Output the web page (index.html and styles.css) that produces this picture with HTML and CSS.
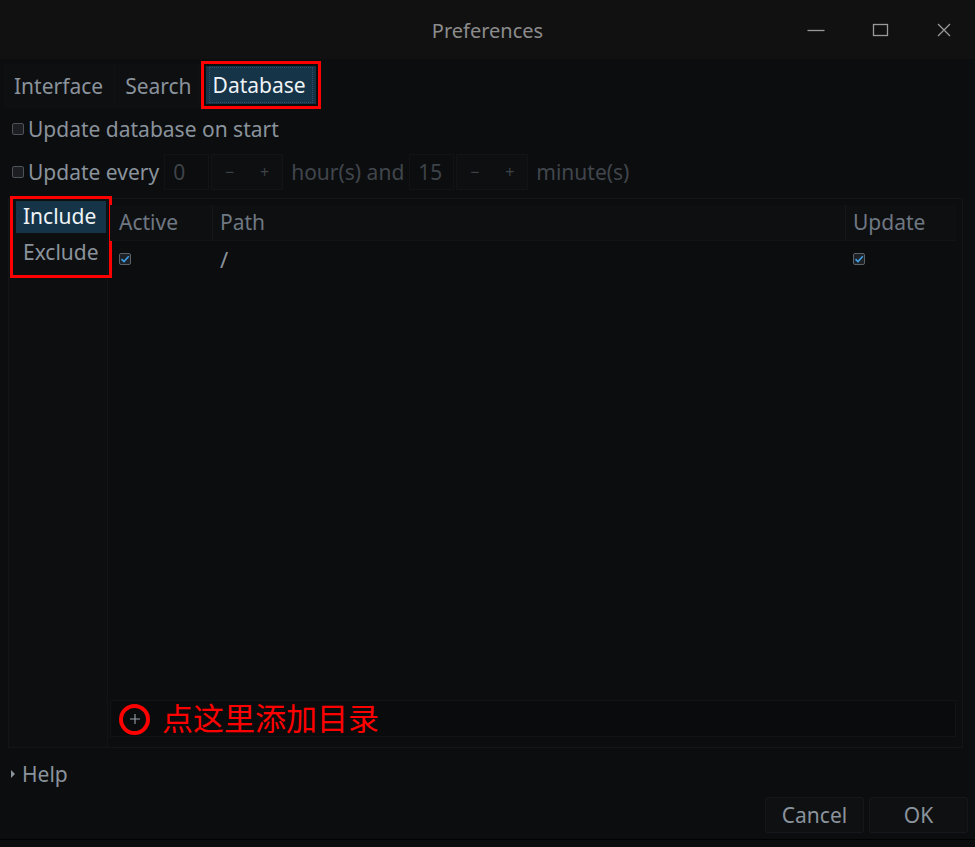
FILE: index.html
```html
<!DOCTYPE html>
<html lang="en">
<head>
<meta charset="utf-8">
<title>Preferences</title>
<link rel="stylesheet" href="styles.css">
</head>
<body>
<div class="window">
  <header class="titlebar">
    <div class="tb-spacer"></div>
    <div class="tb-title">Preferences</div>
    <div class="tb-controls">
      <span class="ctl"><svg width="18" height="18" viewBox="0 0 18 18"><path d="M0.5 9.5H17.5" stroke="#9a9a9a" stroke-width="1.3"/></svg></span>
      <span class="ctl"><svg width="18" height="18" viewBox="0 0 18 18"><rect x="2.5" y="3.5" width="14" height="11" fill="none" stroke="#9a9a9a" stroke-width="1.3"/></svg></span>
      <span class="ctl"><svg width="18" height="18" viewBox="0 0 18 18"><path d="M3 3L15 15M15 3L3 15" stroke="#9a9a9a" stroke-width="1.3"/></svg></span>
    </div>
  </header>

  <nav class="tabs">
    <div class="tab">Interface</div>
    <div class="tab">Search</div>
    <div class="tab tab-active marked"><span class="focus">Database</span></div>
  </nav>

  <section class="options">
    <label class="row"><span class="cb"></span><span class="lbl">Update database on start</span></label>
    <div class="row row-spin">
      <span class="cb"></span><span class="lbl">Update every</span>
      <span class="spin-val">0</span>
      <span class="spin-btns"><span>−</span><span>+</span></span>
      <span class="dim">hour(s) and</span>
      <span class="spin-val">15</span>
      <span class="spin-btns"><span>−</span><span>+</span></span>
      <span class="dim">minute(s)</span>
    </div>
  </section>

  <section class="panel">
    <div class="side">
      <div class="list marked">
        <div class="item item-active">Include</div>
        <div class="item">Exclude</div>
      </div>
    </div>
    <div class="tablewrap">
      <div class="table">
        <div class="thead">
          <div class="th c-active">Active</div>
          <div class="th c-path">Path</div>
          <div class="th c-update">Update</div>
        </div>
        <div class="tr">
          <div class="td c-active"><span class="cb cb-on"><svg width="10" height="10" viewBox="0 0 10 10"><path d="M1.5 5.2L4 7.6L8.8 2.2" fill="none" stroke="#3d9fe6" stroke-width="1.6"/></svg></span></div>
          <div class="td c-path path">/</div>
          <div class="td c-update"><span class="cb cb-on"><svg width="10" height="10" viewBox="0 0 10 10"><path d="M1.5 5.2L4 7.6L8.8 2.2" fill="none" stroke="#3d9fe6" stroke-width="1.6"/></svg></span></div>
        </div>
      </div>
      <div class="toolbar">
        <span class="add-btn"><svg width="12" height="12" viewBox="0 0 12 12"><path d="M6 1V11M1 6H11" stroke="#9aa3ad" stroke-width="1.1"/></svg></span>
        <span class="hint">点这里添加目录</span>
      </div>
    </div>
  </section>

  <div class="help"><span class="tri"></span>Help</div>

  <footer class="buttons">
    <button class="btn">Cancel</button>
    <button class="btn">OK</button>
  </footer>
</div>
</body>
</html>
```

FILE: styles.css
```css
* { box-sizing: border-box; }
html, body { margin: 0; padding: 0; }
body {
  width: 975px;
  height: 847px;
  background: #0c0d0f;
  font-family: "Noto Sans", "Noto Sans CJK SC", sans-serif;
  color: #8a939c;
  overflow: hidden;
}
.window {
  height: 840px;
  display: flex;
  flex-direction: column;
  border-bottom: 1px solid #020203;
}

/* title bar */
.titlebar {
  height: 59px;
  flex: none;
  background: #111112;
  display: grid;
  grid-template-columns: 1fr auto 1fr;
  align-items: center;
}
.tb-title {
  font-size: 20px;
  color: #8c8c8c;
  padding-top: 1px;
}
.tb-controls {
  display: flex;
  justify-content: flex-end;
  padding-right: 22px;
  gap: 46px;
}
.ctl { display: flex; width: 18px; height: 18px; }

/* tabs */
.tabs {
  display: flex;
  align-items: stretch;
  height: 44px;
  flex: none;
  margin: 5px 0 0 4px;
}
.tab {
  font-size: 21px;
  padding: 0 11px 0 10px;
  display: flex;
  align-items: center;
  color: #8a939c;
  background: #0e0f11;
  border-right: 1px solid #101113;
}
.tab:nth-child(2) { padding: 0 7px 0 10px; }
.tab-active {
  background: #163448;
  color: #eef3f7;
  margin: 2px 0 0 6px;
  padding: 0 3px;
  height: 38px;
  align-self: flex-start;
  border: none;
}
.focus {
  border: 1px dotted #2e4f66;
  padding: 0 6px 0 3px;
  line-height: 34px;
}
.marked {
  outline: 3px solid #ff0000;
  outline-offset: 2px;
}

/* options */
.options {
  display: flex;
  flex-direction: column;
  padding: 4px 0 0 12px;
  flex: none;
}
.row {
  display: flex;
  align-items: center;
  font-size: 21px;
  height: 34px;
}
.row-spin { height: 44px; margin-top: 4px; }
.cb {
  display: inline-flex;
  align-items: center;
  justify-content: center;
  width: 12px;
  height: 12px;
  border: 1px solid #4c5258;
  border-radius: 2px;
  background: #1c1e21;
  margin-right: 4px;
}
.cb-on { border-color: #5a6168; background: #1e2125; margin: 0; }
.spin-val {
  width: 45px;
  height: 36px;
  border: 1px solid #111316;
  color: #3d4349;
  margin-left: 5px;
  padding-left: 8px;
  display: flex;
  align-items: center;
}
.spin-btns {
  display: flex;
  width: 72px;
  height: 36px;
  border: 1px solid #121417;
  background: #0e0f11;
  color: #3d4349;
  margin-left: 2px;
  align-items: center;
  justify-content: space-around;
  font-size: 16px;
}
.dim { color: #40464c; margin-left: 8px; }

/* panel */
.panel {
  flex: 1;
  display: flex;
  margin: 4px 12px 0 8px;
  border: 1px solid #131518;
  background: #0c0d0f;
  min-height: 0;
}
.side {
  width: 99px;
  flex: none;
  background: #0d0e10;
  border-right: 1px solid #121417;
  padding: 2px 0 0 6px;
}
.list {
  width: 92px;
  padding: 0 1px 3px;
}
.item {
  font-size: 21px;
  height: 32px;
  display: flex;
  align-items: center;
  padding: 0 0 2px 7px;
  color: #8a939c;
}
.item + .item { margin-top: 3px; height: 34px; }
.item-active { background: #163448; color: #eef3f7; }

.tablewrap {
  flex: 1;
  display: flex;
  flex-direction: column;
  padding: 6px 6px 10px 2px;
}
.table { flex: 1; }
.thead {
  display: flex;
  height: 36px;
  background: #0e0f11;
  border-bottom: 1px solid #121417;
}
.th {
  font-size: 21px;
  color: #6e7882;
  display: flex;
  align-items: center;
  padding: 0 0 1px 9px;
}
.c-active { width: 102px; }
.c-path { flex: 1; border-left: 1px solid #15171a; }
.c-update { width: 111px; border-left: 1px solid #15171a; }
.th.c-path, .th.c-update { padding-left: 7px; }
.tr { display: flex; height: 36px; }
.td { display: flex; align-items: center; padding-left: 9px; }
.td.c-path, .td.c-update { border-left-color: transparent; padding-left: 7px; }
.path { font-size: 22px; color: #8a939c; }
.toolbar {
  display: flex;
  align-items: center;
  height: 37px;
  flex: none;
  background: #0a0b0c;
  border: 1px solid #111315;
  padding-left: 8px;
}
.add-btn {
  width: 31px;
  height: 31px;
  border: 4px solid #ff0000;
  border-radius: 50%;
  display: flex;
  align-items: center;
  justify-content: center;
  margin-top: 1px;
}
.hint {
  font-family: "Noto Sans CJK SC", sans-serif;
  font-size: 31px;
  color: #ff0000;
  margin: 0 0 4px 12px;
  line-height: 1;
}

/* help */
.help {
  display: flex;
  align-items: center;
  font-size: 21px;
  height: 40px;
  flex: none;
  padding: 0 0 1px 11px;
  margin-top: 6px;
}
.tri {
  width: 0; height: 0;
  border-top: 4px solid transparent;
  border-bottom: 4px solid transparent;
  border-left: 4px solid #8a939c;
  margin-right: 7px;
}
.buttons {
  display: flex;
  flex: none;
  justify-content: flex-end;
  gap: 5px;
  padding: 0 7px 6px 0;
  margin-top: 3px;
}
.btn {
  width: 99px;
  height: 36px;
  font-family: "Noto Sans", sans-serif;
  font-size: 21px;
  color: #8a939c;
  background: #0f1012;
  border: 1px solid #15171a;
  border-radius: 2px;
}
```
